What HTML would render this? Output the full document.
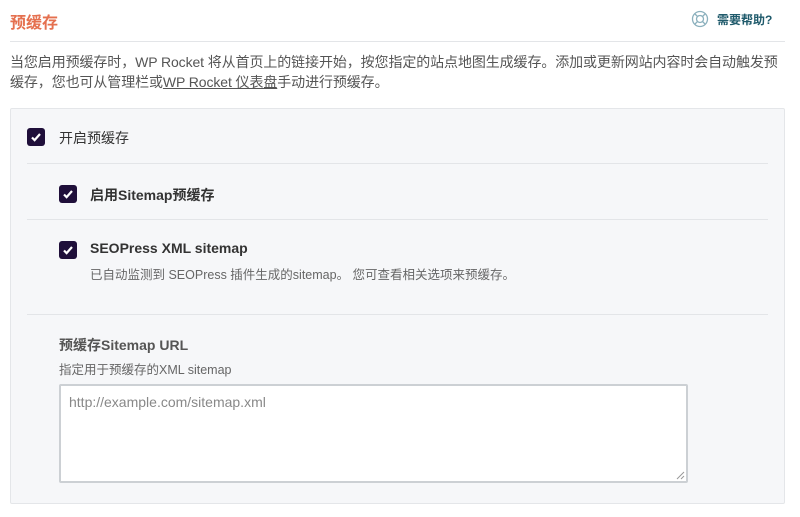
<!DOCTYPE html>
<html><head><meta charset="utf-8"><style>
*{margin:0;padding:0;box-sizing:border-box}
body{width:800px;height:517px;background:#fff;font-family:"Liberation Sans","Noto Sans CJK SC",sans-serif;position:relative;overflow:hidden;color:#333}
.a{position:absolute;white-space:nowrap}
.cb{position:absolute;width:18px;height:18px;background:#1f0f3a;border-radius:3px}
.cb svg{position:absolute;left:3px;top:3px}
.sep{position:absolute;height:1px;background:#e3e5e8}
</style></head><body>
<div class="a" style="left:10px;top:9px;font-size:16px;font-weight:bold;color:#e5704f">预缓存</div>
<svg class="a" style="left:691px;top:10px" width="18" height="18" viewBox="0 0 18 18"><circle cx="9" cy="9" r="7.5" fill="none" stroke="#8bb0bd" stroke-width="1.3"/><circle cx="9" cy="9" r="3.5" fill="none" stroke="#8bb0bd" stroke-width="1.3"/><path d="M4 4l2.5 2.5M14 4l-2.5 2.5M4 14l2.5-2.5M14 14l-2.5-2.5" stroke="#8bb0bd" stroke-width="1.3"/></svg>
<div class="a" style="left:717px;top:11px;font-size:12px;font-weight:bold;color:#1f5a6b">需要帮助?</div>
<div class="sep" style="left:10px;top:41px;width:775px"></div>
<div class="a" style="left:10px;top:52px;font-size:14px;letter-spacing:-0.1px;line-height:20px;color:#555">当您启用预缓存时，WP Rocket 将从首页上的链接开始，按您指定的站点地图生成缓存。添加或更新网站内容时会自动触发预<br>缓存，您也可从管理栏或<u>WP Rocket 仪表盘</u>手动进行预缓存。</div>
<div class="a" style="left:10px;top:108px;width:775px;height:396px;background:#f6f7f9;border:1px solid #e4e6e9;border-radius:2px"></div>
<div class="cb" style="left:27px;top:128px"><svg width="12" height="12" viewBox="0 0 12 12"><path d="M2 6.5l2.6 2.6L10 3" fill="none" stroke="#fff" stroke-width="2.2"/></svg></div>
<div class="a" style="left:59px;top:128px;font-size:14px;color:#333">开启预缓存</div>
<div class="sep" style="left:27px;top:163px;width:741px"></div>
<div class="cb" style="left:59px;top:185px"><svg width="12" height="12" viewBox="0 0 12 12"><path d="M2 6.5l2.6 2.6L10 3" fill="none" stroke="#fff" stroke-width="2.2"/></svg></div>
<div class="a" style="left:90px;top:185px;font-size:14px;font-weight:bold;color:#333">启用Sitemap预缓存</div>
<div class="sep" style="left:27px;top:219px;width:741px"></div>
<div class="cb" style="left:59px;top:241px"><svg width="12" height="12" viewBox="0 0 12 12"><path d="M2 6.5l2.6 2.6L10 3" fill="none" stroke="#fff" stroke-width="2.2"/></svg></div>
<div class="a" style="left:90px;top:240px;font-size:14px;font-weight:bold;color:#333">SEOPress XML sitemap</div>
<div class="a" style="left:90px;top:264px;font-size:12.5px;color:#666">已自动监测到 SEOPress 插件生成的sitemap。 您可查看相关选项来预缓存。</div>
<div class="sep" style="left:27px;top:314px;width:741px"></div>
<div class="a" style="left:59px;top:335px;font-size:14px;font-weight:bold;color:#555">预缓存Sitemap URL</div>
<div class="a" style="left:59px;top:359px;font-size:12.5px;color:#666">指定用于预缓存的XML sitemap</div>
<div class="a" style="left:59px;top:384px;width:629px;height:99px;background:#fff;border:2px solid #ccd0d4;border-radius:2px"></div>
<div class="a" style="left:69px;top:394px;font-size:14px;color:#888">http://example.com/sitemap.xml</div>
<svg class="a" style="left:676px;top:471px" width="9" height="9"><path d="M8 1L1 8M8 5L5 8" stroke="#999"/></svg>
</body></html>
